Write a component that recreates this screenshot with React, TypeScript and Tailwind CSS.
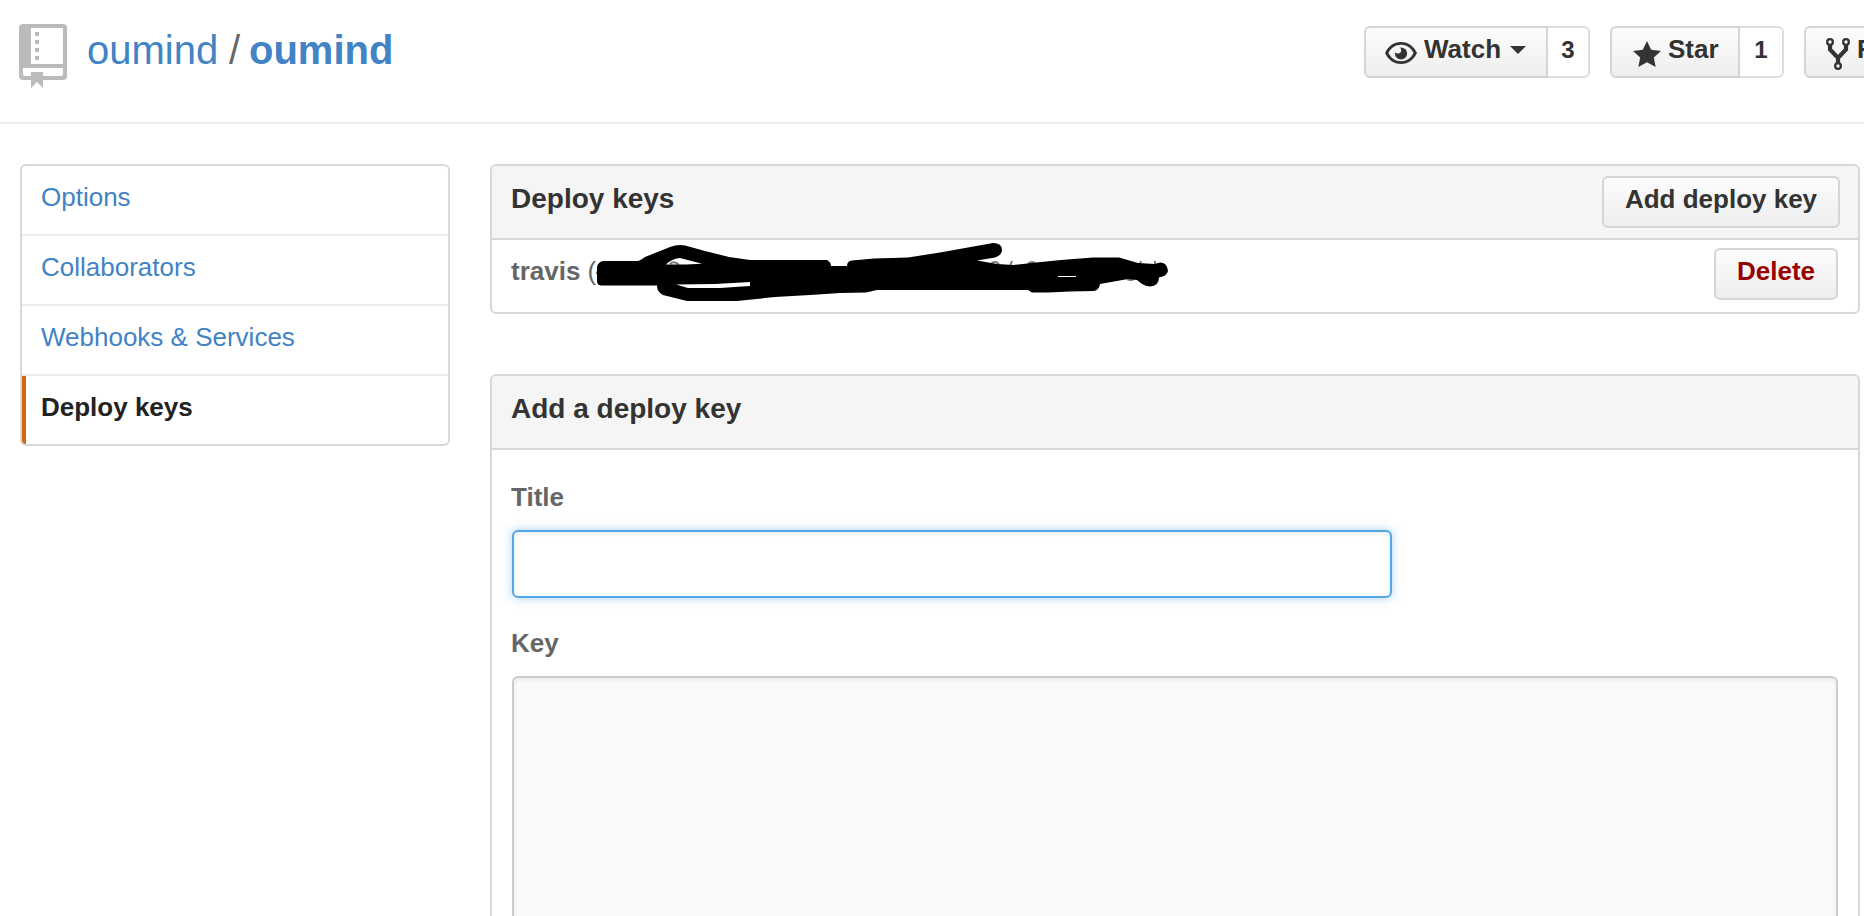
import type { ReactNode } from 'react';

const menu = [
  { label: 'Options', selected: false },
  { label: 'Collaborators', selected: false },
  { label: 'Webhooks & Services', selected: false },
  { label: 'Deploy keys', selected: true },
];

function RepoIcon() {
  return (
    <svg className="block h-16 w-12 shrink-0" viewBox="0 0 12 16" fill="#bbbbbb" fillRule="evenodd">
      <path d="M1 0h10a1 1 0 0 1 1 1v12a1 1 0 0 1-1 1H6v2L4.5 14.5 3 16v-2H1a1 1 0 0 1-1-1V1a1 1 0 0 1 1-1zM3 1v9h8V1zM1 11v1.5a.5.5 0 0 0 .5.5H3v-1h3v1h4.5a.5.5 0 0 0 .5-.5V11z" />
      <path d="M4 2h1v1H4zM4 4h1v1H4zM4 6h1v1H4zM4 8h1v1H4z" />
    </svg>
  );
}

function EyeIcon() {
  return (
    <svg className="block h-[22px] w-8 shrink-0" viewBox="0 0 32 22" fill="#333333">
      <path
        fillRule="evenodd"
        d="M16 0C8.5 0 3 4.500 0 11c3 6.500 8.500 11 16 11s13-4.500 16-11C29 4.500 23.500 0 16 0zM16 2.800c5.600 0 10 3 12.500 8.200C26 16.200 21.600 19.200 16 19.200S6 16.200 3.500 11C6 5.800 10.400 2.800 16 2.800z"
      />
      <circle cx="16" cy="11.500" r="6.100" />
      <circle cx="12.800" cy="8.300" r="3.300" fill="#f6f6f6" />
    </svg>
  );
}

function StarIcon() {
  return (
    <svg className="block h-[26px] w-7 shrink-0" viewBox="0 1 14 13" fill="#333333">
      <path d="M14 6l-4.900-.64L7 1 4.900 5.360 0 6l3.600 3.260L2.670 14 7 11.670 11.330 14l-.93-4.740z" />
    </svg>
  );
}

function ForkIcon() {
  return (
    <svg className="block h-8 w-6 shrink-0" viewBox="0 0 24 32" fill="none" stroke="#333333">
      <g strokeWidth="2.300">
        <circle cx="4" cy="4" r="2.850" />
        <circle cx="20" cy="4" r="2.850" />
        <circle cx="12" cy="28" r="2.850" />
      </g>
      <path d="M4 7v4.500l8 8.500 8-8.500V7M12 19v6" strokeWidth="4.200" />
    </svg>
  );
}

function Button({ children, className = '' }: { children: ReactNode; className?: string }) {
  return (
    <button
      className={`flex h-[52px] shrink-0 items-start border-2 border-[#d5d5d5] bg-linear-to-b from-[#fcfcfc] to-[#eeeeee] text-[26px] leading-[42px] font-bold whitespace-nowrap ${className}`}
    >
      {children}
    </button>
  );
}

function Count({ children, className }: { children: ReactNode; className: string }) {
  return (
    <span
      className={`h-[52px] rounded-r-md border-2 border-l-0 border-[#dddddd] bg-white text-center text-2xl leading-[43px] font-bold text-[#333333] ${className}`}
    >
      {children}
    </span>
  );
}

/* Hand-drawn marker strokes that hide the key fingerprint. */
function Redaction() {
  return (
    <svg className="absolute top-0 left-[102px] h-[72px] w-[580px]" viewBox="594 240 580 72">
      <g fill="none" stroke="#777777" strokeWidth="2">
        <path d="M596.500 274q2-5 4-5M670 264q4-4 9 1M991 264q4-4 8 0M1010 266l2-5M1028 264q4-4 8 0M1140 264l1-3M1155 264v-3M1127 279q4 2 7 0" />
      </g>
      <path
        fillRule="evenodd"
        d="M597 267Q598 262 603 261L638 261Q641 260 645 257L670 247Q678 244 685 245.500L705 251 729 257 750 260 827 260Q831 262 831 266L847 266Q847 261 852 260.500L874 258.500 908 257.500 940 252.500 993 243Q1002 243 1002 250 1002 255 995 257.500L977 260.500 997 264 1013 265 1041 262 1061 260 1093 257.500 1119 257.500 1138 263 1155 264Q1161 261 1165 264 1168 267 1168 271 1167 276 1159 277.500 1159 286 1150 286.500 1144 286.500 1137 280L1128 279 1100 284Q1099 290 1094 291L1070 291.500 1048 292.500 1032 292.500 1028 290 877 290 866 292.500 840 293 810 295 775 297 737 301 687 301 663 295Q657 292 657 285.500L601 285.500Q597 285 597 281zM666 264.500Q673 258 680 258L702 263.700 686 264.500zM676 284.500L715 284 750 282 750 286 720 288 688 288zM1058 276L1076 276 1076 277 1058 277z"
      />
    </svg>
  );
}

export default function App() {
  return (
    <div className="h-[916px] w-full overflow-hidden bg-white font-['Liberation_Sans',Arial,sans-serif] text-[26px] text-[#666666]">
      <header className="flex h-[124px] border-b-2 border-[#eeeeee]">
        <div className="flex w-[1364px] shrink-0 pl-[19px]">
          <div className="pt-6">
            <RepoIcon />
          </div>
          <h1 className="flex pl-5 text-[40px] leading-[100px] whitespace-nowrap">
            <a className="w-[142px] text-[#4183c4]">oumind</a>
            <span className="w-[20px]">/</span>
            <a className="font-bold text-[#4183c4]">oumind</a>
          </h1>
        </div>
        <div className="flex shrink-0 gap-5 pt-[26px]">
          <div className="flex">
            <Button className="w-[184px] rounded-l-md pl-[19px] text-[#333333]">
              <span className="mt-[14px]">
                <EyeIcon />
              </span>
              <span className="ml-[7px]">Watch</span>
              <svg className="mt-[18px] ml-[9px] block h-2 w-4" viewBox="0 0 16 8" fill="#333333">
                <path d="M0 0h16L8 8z" />
              </svg>
            </Button>
            <Count className="w-[42px]">3</Count>
          </div>
          <div className="flex">
            <Button className="w-[130px] rounded-l-md pl-[21px] text-[#333333]">
              <span className="mt-[13px]">
                <StarIcon />
              </span>
              <span className="ml-[7px]">Star</span>
            </Button>
            <Count className="w-11">1</Count>
          </div>
          <Button className="w-[130px] rounded-l-md pl-5 text-[#333333]">
            <span className="mt-2.5">
              <ForkIcon />
            </span>
            <span className="ml-[7px]">Fork</span>
          </Button>
        </div>
      </header>

      <div className="flex items-start gap-10 pt-10 pl-5">
        <nav className="w-[430px] shrink-0 overflow-hidden rounded-md border-2 border-[#d8d8d8]">
          {menu.map((item) => (
            <a
              key={item.label}
              className={
                item.selected
                  ? 'block h-[68px] border-l-4 border-[#d26911] pl-[15px] leading-[62px] font-bold text-[#222222]'
                  : 'block h-[70px] border-b-2 border-[#eeeeee] pl-[19px] leading-[62px] text-[#4183c4]'
              }
            >
              {item.label}
            </a>
          ))}
        </nav>

        <main className="flex w-[1370px] shrink-0 flex-col gap-[60px]">
          <section className="h-[150px] rounded-md border-2 border-[#d8d8d8]">
            <div className="flex h-[74px] justify-between rounded-t border-b-2 border-[#d8d8d8] bg-[#f5f5f5] pr-[18px] pl-[19px]">
              <h3 className="text-[28px] leading-[65px] font-bold text-[#333333]">Deploy keys</h3>
              <Button className="mt-2.5 w-[238px] justify-center rounded-md text-[#333333]">Add deploy key</Button>
            </div>
            <div className="relative flex h-[72px] justify-between pr-5 pl-[19px]">
              <p className="leading-[62px]">
                <strong>travis</strong> (
              </p>
              <Redaction />
              <Button className="mt-2 w-[124px] justify-center rounded-md text-[#990000]">Delete</Button>
            </div>
          </section>

          <section className="h-[800px] rounded-md border-2 border-[#d8d8d8]">
            <h3 className="h-[74px] rounded-t border-b-2 border-[#d8d8d8] bg-[#f5f5f5] pl-[19px] text-[28px] leading-[65px] font-bold text-[#333333]">
              Add a deploy key
            </h3>
            <div className="flex flex-col pr-5 pl-5">
              <label className="-ml-[1px] h-20 pt-[31px] leading-8 font-bold">Title</label>
              <input
                type="text"
                className="h-[68px] w-[880px] rounded-md border-2 border-[#51a7e8] bg-white px-4 shadow-[inset_0_2px_4px_rgba(0,0,0,0.075),0_0_10px_rgba(81,167,232,0.5)] outline-none"
              />
              <label className="-ml-[1px] h-[78px] pt-[29px] leading-8 font-bold">Key</label>
              <textarea className="h-[400px] w-full resize-none rounded-md border-2 border-[#cccccc] bg-[#fafafa] p-4 shadow-[inset_0_2px_4px_rgba(0,0,0,0.075)] outline-none" />
            </div>
          </section>
        </main>
      </div>
    </div>
  );
}
